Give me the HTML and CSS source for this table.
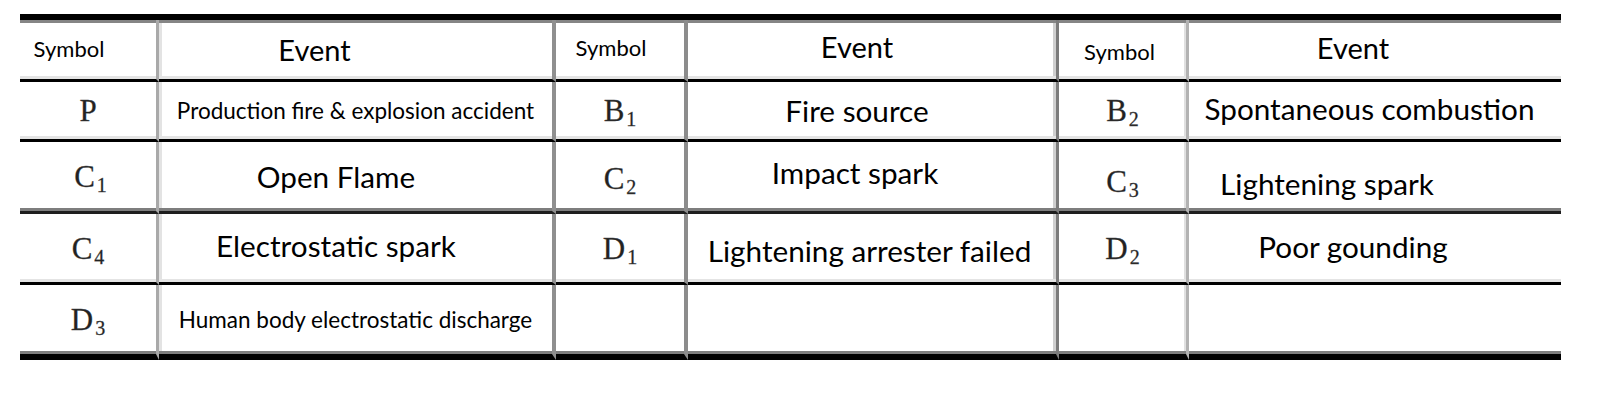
FILE: index.html
```html
<!DOCTYPE html>
<html lang="en">
<head>
<meta charset="utf-8">
<title>Event symbols</title>
<link rel="stylesheet" href="styles.css">
</head>
<body>
<div class="grid">
  <div class="row head">
    <div class="cell"><span class="hs mr-38 mb-2">Symbol</span></div>
    <div class="cell"><span class="he mr-82">Event</span></div>
    <div class="cell"><span class="hs mr-18 mb-4">Symbol</span></div>
    <div class="cell"><span class="he mr-30 mb-7">Event</span></div>
    <div class="cell"><span class="hs mr-6 mt-4">Symbol</span></div>
    <div class="cell"><span class="he mr-44 mb-5">Event</span></div>
  </div>
  <div class="row r1">
    <div class="cell"><span class="sym">P</span></div>
    <div class="cell"><span class="sm">Production fire &amp; explosion accident</span></div>
    <div class="cell"><span class="sym">B<sub>1</sub></span></div>
    <div class="cell"><span class="lg mr-30">Fire source</span></div>
    <div class="cell"><span class="sym">B<sub>2</sub></span></div>
    <div class="cell"><span class="lg mr-11 mb-5">Spontaneous combustion</span></div>
  </div>
  <div class="row r2">
    <div class="cell"><span class="sym ml-5">C<sub>1</sub></span></div>
    <div class="cell"><span class="lg mr-39">Open Flame</span></div>
    <div class="cell"><span class="sym mt-3">C<sub>2</sub></span></div>
    <div class="cell"><span class="lg mr-34 mb-9">Impact spark</span></div>
    <div class="cell"><span class="sym mt-9">C<sub>3</sub></span></div>
    <div class="cell"><span class="lg mr-96 mt-13">Lightening spark</span></div>
  </div>
  <div class="row r3">
    <div class="cell"><span class="sym">C<sub>4</sub></span></div>
    <div class="cell"><span class="lg mr-39 mb-6">Electrostatic spark</span></div>
    <div class="cell"><span class="sym">D<sub>1</sub></span></div>
    <div class="cell"><span class="lg mr-5 mt-4">Lightening arrester failed</span></div>
    <div class="cell"><span class="sym">D<sub>2</sub></span></div>
    <div class="cell"><span class="lg mr-44 mb-4">Poor gounding</span></div>
  </div>
  <div class="row r4">
    <div class="cell"><span class="sym">D<sub>3</sub></span></div>
    <div class="cell"><span class="sm">Human body electrostatic discharge</span></div>
    <div class="cell"></div>
    <div class="cell"></div>
    <div class="cell"></div>
    <div class="cell"></div>
  </div>
</div>
</body>
</html>
```
FILE: styles.css
```css
* { box-sizing: border-box; }

body {
  margin: 0;
  padding: 14px 0 0 20px;
  background: #fff;
  color: #000;
  font-family: Lato, "Open Sans", sans-serif;
}

.grid {
  display: grid;
  width: 1541px;
  grid-template-columns: 139px 397px 132px 371px 130px 372px;
  grid-template-rows: 62px 60px 72px 71px 75px;
  border-top: 6px solid #000;
}

.row { display: contents; }

.cell {
  display: flex;
  align-items: center;
  justify-content: center;
  white-space: nowrap;
  border-bottom: 3px solid #000;
  box-shadow: inset 0 -3px 0 #e4e4e4;
}

.row.head .cell { box-shadow: inset 0 3px 0 #858585, inset 0 -3px 0 #e4e4e4; }
.row.r2 .cell { border-bottom-color: #1e1e1e; box-shadow: inset 0 -3px 0 #7e7e7e; }
.row.r4 .cell { border-bottom-width: 6px; box-shadow: inset 0 -3px 0 #7e7e7e; }

.row > .cell:nth-child(1) { border-right: 3px solid #a9a9a9; }
.row > .cell:nth-child(2) {
  border-right: 4px solid #8f8f8f;
  background: linear-gradient(to right, #e3e3e3 3px, transparent 3px);
}
.row > .cell:nth-child(3) { border-right: 4px solid #8c8c8c; }
.row > .cell:nth-child(4) {
  border-right: 3px solid #7b7b7b;
  background: linear-gradient(to left, #cfcfcf 3px, transparent 3px);
}
.row > .cell:nth-child(5) {
  border-right: 3px solid #b2b2b2;
  background: linear-gradient(to left, #e0e0e0 2px, transparent 2px);
}

.hs { font-size: 22px; }
.he { font-size: 29px; }
.lg { font-size: 29.7px; }
.sm { font-size: 22.5px; }

.sym {
  font-family: "Liberation Serif", "Times New Roman", serif;
  font-size: 31px;
  line-height: 1;
  color: #222;
  -webkit-text-stroke: 0.3px #444;
}
.sym sub {
  font-size: 20px;
  line-height: 0;
  vertical-align: -5px;
  margin-left: 2px;
}

/* position nudges */
.mr-5 { margin-right: 5px; }
.mr-6 { margin-right: 6px; }
.mr-11 { margin-right: 11px; }
.mr-18 { margin-right: 18px; }
.mr-30 { margin-right: 30px; }
.mr-34 { margin-right: 34px; }
.mr-38 { margin-right: 38px; }
.mr-39 { margin-right: 39px; }
.mr-44 { margin-right: 44px; }
.mr-82 { margin-right: 82px; }
.mr-96 { margin-right: 96px; }
.ml-5 { margin-left: 5px; }
.mb-2 { margin-bottom: 2px; }
.mb-4 { margin-bottom: 4px; }
.mb-5 { margin-bottom: 5px; }
.mb-6 { margin-bottom: 6px; }
.mb-7 { margin-bottom: 7px; }
.mb-9 { margin-bottom: 9px; }
.mt-3 { margin-top: 3px; }
.mt-4 { margin-top: 4px; }
.mt-9 { margin-top: 9px; }
.mt-13 { margin-top: 13px; }
```
